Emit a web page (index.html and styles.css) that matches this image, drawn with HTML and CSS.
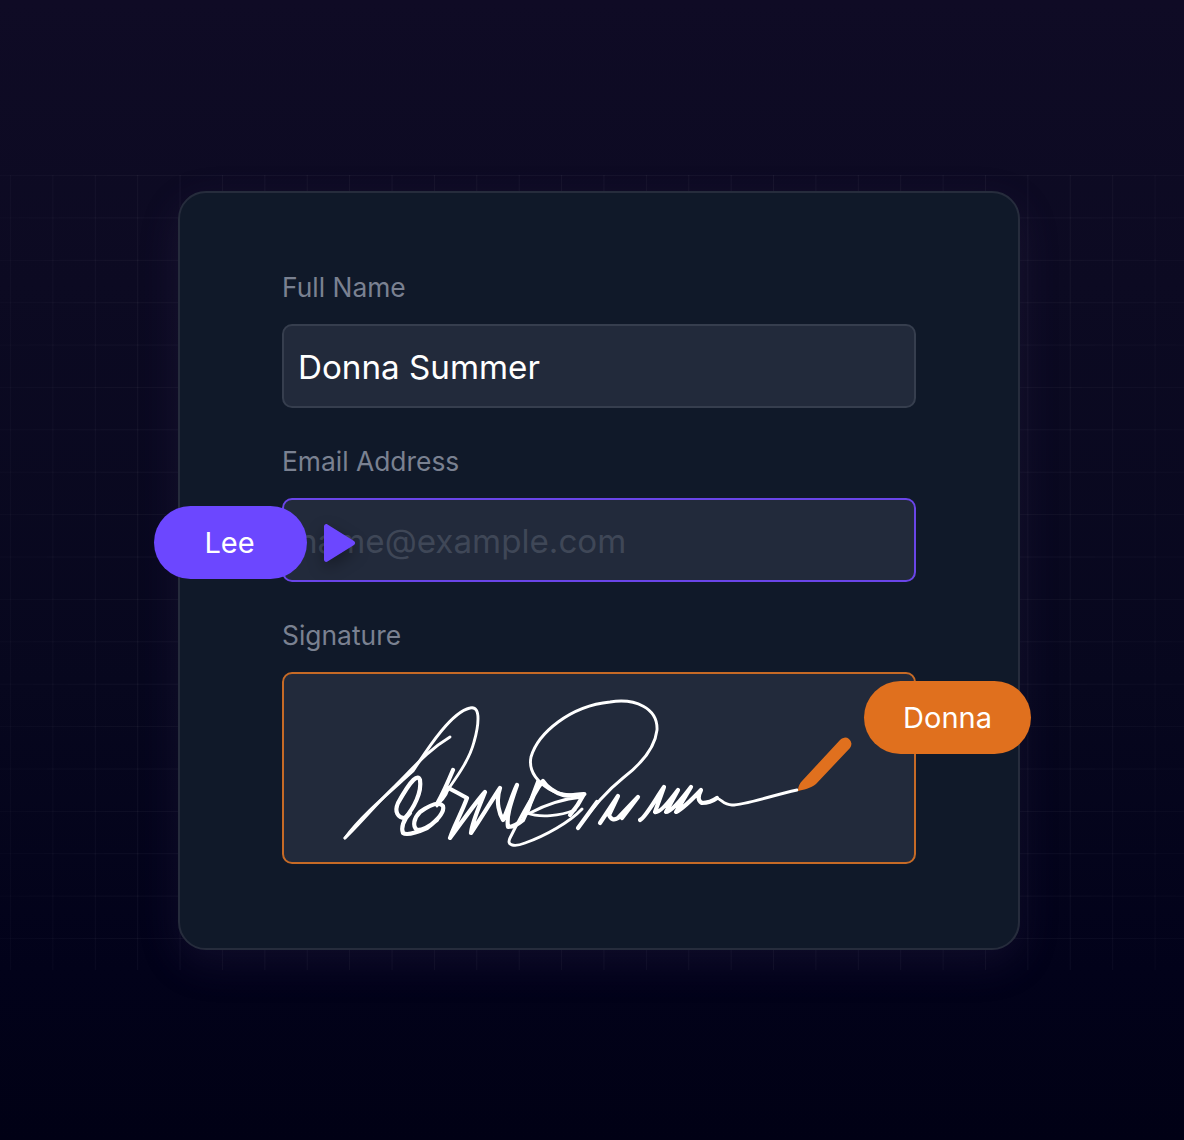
FILE: index.html
```html
<!DOCTYPE html>
<html lang="en">
<head>
<meta charset="utf-8">
<title>Signature form</title>
<link rel="stylesheet" href="styles.css">
</head>
<body>
<main class="stage">
  <div class="grid"></div>
  <form class="card">
    <div class="field">
      <label class="label">Full Name</label>
      <div class="input filled">Donna Summer</div>
    </div>
    <div class="field">
      <label class="label">Email Address</label>
      <div class="input active">name@example.com</div>
    </div>
    <div class="field">
      <label class="label">Signature</label>
      <div class="sigbox">
        <svg class="sig" viewBox="284 674 630 188" aria-hidden="true">
          <g class="ink thin">
            <path d="M345 838C358 826 378 802 395 786C410 772 425 752 450 737"/>
            <path d="M345 838C362 815 390 792 413 771C430 745 452 712 470 708C482 705 478 728 474 742C468 765 450 785 437 806"/>
            <path d="M585 794C570 796 557 794 549 789C538 782 528 772 531 757C538 733 570 706 610 702C635 698 658 708 657 730C655 748 640 765 623 778C608 790 592 808 578 828"/>
            <path d="M530 813C545 805 562 799 582 797"/>
            <path d="M527 813C540 818 560 816 575 810"/>
            <path d="M543 781C532 795 518 822 510 838C506 846 515 847 525 843C545 836 570 822 582 809"/>
            <path d="M717 798C722 800 724 805 732 805C745 805 770 796 797 790"/>
          </g>
          <g class="ink">
            <path d="M398 803C394 812 398 818 405 818C414 808 422 792 420 780C418 774 412 778 398 803"/>
            <path d="M410 813C403 820 401 828 403 833C407 836 418 832 427 828C435 822 445 813 443 806C438 800 427 807 420 812C414 818 412 826 417 830C423 830 430 826 437 820"/>
            <path d="M453 770C448 782 442 795 437 804C445 797 448 790 447 787C452 790 460 794 467 798C462 812 453 828 450 838C462 822 475 803 485 792C480 805 472 822 471 833C480 820 492 800 500 788C495 802 500 815 503 820C508 810 512 795 517 785C512 800 506 815 508 827C514 827 518 824 523 820C528 810 534 792 538 782"/>
            <path d="M527 813C530 803 535 790 543 781C546 786 555 793 563 795C570 797 576 794 584 794C580 802 576 808 570 815"/>
            <path d="M578 828L597 802M600 823L618 796L609 815Q612 822 618 818L638 797L622 818M640 820C645 818 655 800 664 787L655 812Q660 814 678 790L666 812Q672 812 691 787L676 812Q684 808 701 790Q696 800 702 803Q710 803 717 798"/>
          </g>
          <path class="pen" d="M798 791C798 786 800 783 802 781L840 740A6.400 6.400 0 0 1 850 748L816 784C811 788 803 790 798 791Z"/>
        </svg>
      </div>
    </div>
  </form>
  <div class="pill lee">Lee</div>
  <svg class="cursor" viewBox="0 0 36 42" aria-hidden="true"><path d="M3 4.500C3 2.500 5 1.500 6.500 2.500L33 19C34.500 20 34.500 22 33 23L6.500 39.500C5 40.500 3 39.500 3 37.500Z"/></svg>
  <div class="pill donna">Donna</div>
</main>
</body>
</html>
```
FILE: styles.css
```css
* { box-sizing: border-box; }
html, body { margin: 0; height: 1140px; }
body {
  background: linear-gradient(180deg, #0f0b25 0%, #0c0a22 25%, #07071e 60%, #02021a 85%, #010115 100%);
  font-family: Inter, "Liberation Sans", sans-serif;
  overflow: hidden;
}
.stage {
  position: relative;
  width: 1184px;
  height: 1140px;
  padding: 191px 164px 0 178px;
}
.grid {
  position: absolute;
  left: 0;
  right: 0;
  top: 175px;
  height: 795px;
  background-image:
    linear-gradient(90deg, rgba(255,255,255,.045) 1px, transparent 1px),
    linear-gradient(180deg, rgba(255,255,255,.04) 1px, transparent 1px);
  background-size: 42.4px 42.4px;
  background-position: 10px 0;
  -webkit-mask-image: linear-gradient(90deg, rgba(0,0,0,.5) 0, #000 10%, #000 90%, rgba(0,0,0,.6) 100%);
  mask-image: linear-gradient(90deg, rgba(0,0,0,.5) 0, #000 10%, #000 90%, rgba(0,0,0,.6) 100%);
}
.card {
  position: relative;
  width: 842px;
  height: 759px;
  padding: 78px 102px 0;
  background: #101929;
  border: 2px solid #262c3c;
  border-radius: 28px;
  box-shadow: 0 14px 40px rgba(84, 66, 116, .17);
}
.field { margin-bottom: 37px; }
.label {
  display: block;
  height: 36px;
  margin-bottom: 17px;
  font-size: 26.4px;
  line-height: 33px;
  color: #7a8191;
}
.input {
  height: 84px;
  padding: 0 14px;
  background: #222a3b;
  border: 2px solid #363e4e;
  border-radius: 10px;
  font-size: 33.2px;
  line-height: 82px;
  white-space: nowrap;
}
.filled { color: #fff; }
.active {
  border-color: #6a45e8;
  color: #3f4757;
}
.sigbox {
  height: 192px;
  background: #222a3b;
  border: 2px solid #c66a26;
  border-radius: 10px;
  overflow: hidden;
}
.sig {
  display: block;
  width: 630px;
  height: 188px;
}
.ink {
  fill: none;
  stroke: #fff;
  stroke-width: 4.2;
  stroke-linecap: round;
  stroke-linejoin: round;
}
.thin { stroke-width: 2.9; }
.pen { fill: #e0701e; }
.pill {
  position: absolute;
  display: flex;
  align-items: center;
  justify-content: center;
  height: 73px;
  border-radius: 37px;
  color: #fff;
  font-size: 29px;
}
.lee {
  left: 154px;
  top: 506px;
  width: 153px;
  padding-right: 2px;
  background: #6c47ff;
}
.donna {
  left: 864px;
  top: 681px;
  width: 167px;
  background: #e0701e;
}
.cursor {
  position: absolute;
  left: 321px;
  top: 522px;
  width: 36px;
  height: 42px;
  fill: #6c47ff;
  filter: drop-shadow(0 6px 8px rgba(0,0,0,.35));
}
```
